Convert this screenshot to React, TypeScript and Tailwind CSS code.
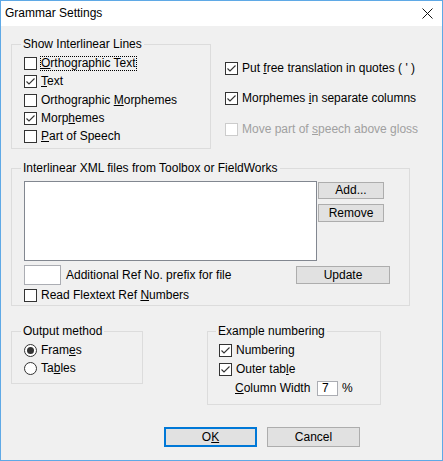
import React from "react";

const CheckBox: React.FC<{ checked?: boolean; disabled?: boolean }> = ({ checked, disabled }) => (
  <div
    className={`w-[13px] h-[13px] shrink-0 bg-white border ${
      disabled ? "border-[#cccccc]" : "border-[#333333]"
    } flex items-center justify-center`}
  >
    {checked && (
      <svg width="11" height="11" viewBox="0 0 11 11">
        <path d="M1.5 5.5 L4 8 L9.5 2.5" fill="none" stroke="#333333" strokeWidth="1.1" />
      </svg>
    )}
  </div>
);

const Radio: React.FC<{ checked?: boolean }> = ({ checked }) => (
  <div className="w-[13px] h-[13px] shrink-0 rounded-full bg-white border border-[#333333] flex items-center justify-center">
    {checked && <div className="w-[7px] h-[7px] rounded-full bg-[#333333]" />}
  </div>
);

const Check: React.FC<{
  checked?: boolean;
  disabled?: boolean;
  className?: string;
  children: React.ReactNode;
}> = ({ checked, disabled, className = "", children }) => (
  <div className={`flex items-center ${className}`}>
    <CheckBox checked={checked} disabled={disabled} />
    <span className={`ml-[4px] whitespace-nowrap ${disabled ? "text-[#a0a0a0]" : ""}`}>{children}</span>
  </div>
);

const Button: React.FC<{ className?: string; children: React.ReactNode }> = ({ className = "", children }) => (
  <div
    className={`flex items-center justify-center bg-[#e1e1e1] border border-[#adadad] ${className}`}
  >
    {children}
  </div>
);

// legend sits on the fieldset's content edge, so pull it back over the padding
const Legend: React.FC<{ children: React.ReactNode }> = ({ children }) => (
  <legend className="-ml-[3px] px-[2px] leading-[15px]">{children}</legend>
);

export default function App() {
  return (
    <div className="w-[443px] h-[461px] border border-[#5fa9e6] bg-[#f0f0f0] flex flex-col font-['Liberation_Sans',Arial,sans-serif] text-[12px] text-black leading-[15px]">
      <div className="h-[25px] shrink-0 bg-white flex items-center justify-between pl-[4px] pr-[9px]">
        <span>Grammar Settings</span>
        <svg width="11" height="11" viewBox="0 0 11 11">
          <path d="M0.5 0.5 L10.5 10.5 M10.5 0.5 L0.5 10.5" stroke="#111" strokeWidth="1" />
        </svg>
      </div>

      <div className="pl-[10px]">
        {/* top row */}
        <div className="flex items-start mt-[11px]">
          <fieldset className="w-[200px] border border-[#dcdcdc] pl-[12px] pb-[3px]">
            <Legend>Show Interlinear Lines</Legend>
            <div className="pt-[2px] flex flex-col">
              <div className="flex items-center h-[18px]">
                <CheckBox />
                <span className="ml-[3px] border border-dotted border-black leading-[13px] whitespace-nowrap">
                  <u>O</u>rthographic Text
                </span>
              </div>
              <Check checked className="h-[19px]">
                <u>T</u>ext
              </Check>
              <Check className="h-[18px]">
                Orthographic <u>M</u>orphemes
              </Check>
              <Check checked className="h-[18px]">
                Morp<u>h</u>emes
              </Check>
              <Check className="h-[18px]">
                <u>P</u>art of Speech
              </Check>
            </div>
          </fieldset>

          <div className="ml-[14px] pt-[22px] flex flex-col gap-[12.5px]">
            <Check checked className="h-[18px]">
              Put <u>f</u>ree translation in quotes ( ' )
            </Check>
            <Check checked className="h-[18px]">
              Morphemes <u>i</u>n separate columns
            </Check>
            <Check disabled className="h-[18px]">
              Move part of <u>s</u>peech above gloss
            </Check>
          </div>
        </div>

        {/* XML files */}
        <fieldset className="mt-[12px] w-[399px] border border-[#dcdcdc] pl-[12px] pb-[3px]">
          <Legend>Interlinear XML files from Toolbox or FieldWorks</Legend>
          <div className="pt-[5px] flex items-start">
            <div className="w-[293px] h-[80px] bg-white border border-[#828790]" />
            <div className="ml-[1px] pt-[1px] flex flex-col gap-[5px]">
              <Button className="w-[66px] h-[17px]">Add...</Button>
              <Button className="w-[66px] h-[18px]">Remove</Button>
            </div>
          </div>
          <div className="mt-[4px] flex items-center pr-[19px]">
            <div className="w-[37px] h-[20px] bg-white border border-[#abadb3]" />
            <span className="ml-[5px]">Additional Ref No. prefix for file</span>
            <Button className="ml-auto w-[94px] h-[18px]">Update</Button>
          </div>
          <Check className="mt-[4px] h-[13px]">
            Read Flextext Ref <u>N</u>umbers
          </Check>
        </fieldset>

        {/* bottom groups */}
        <div className="mt-[18px] flex items-start">
          <fieldset className="w-[132px] border border-[#dcdcdc] pl-[12px] pb-[5px]">
            <Legend>Output method</Legend>
            <div className="pt-[2px] flex flex-col">
              <div className="flex items-center h-[18px]">
                <Radio checked />
                <span className="ml-[4px]">
                  Fram<u>e</u>s
                </span>
              </div>
              <div className="flex items-center h-[19px]">
                <Radio />
                <span className="ml-[4px]">
                  Ta<u>b</u>les
                </span>
              </div>
            </div>
          </fieldset>

          <fieldset className="ml-[64px] w-[174px] border border-[#dcdcdc] pl-[11px] pb-[6px]">
            <Legend>Example numbering</Legend>
            <div className="pt-[2px] flex flex-col">
              <Check checked className="h-[19px]">
                Numberin<u>g</u>
              </Check>
              <Check checked className="h-[19px]">
                Outer tab<u>l</u>e
              </Check>
              <div className="flex items-center h-[19px] pl-[16px]">
                <span className="w-[82px] whitespace-nowrap">
                  <u>C</u>olumn Width
                </span>
                <div className="w-[21px] h-[15px] bg-white border border-[#abadb3] pl-[4px] leading-[13px]">7</div>
                <span className="ml-[4px]">%</span>
              </div>
            </div>
          </fieldset>
        </div>

        {/* buttons */}
        <div className="mt-[22px] flex items-center pl-[153px]">
          <div className="w-[93px] h-[20px] flex items-center justify-center bg-[#e1e1e1] border-2 border-[#0078d7]">
            <span>
              O<u>K</u>
            </span>
          </div>
          <Button className="ml-[10px] w-[93px] h-[20px]">Cancel</Button>
        </div>
      </div>
    </div>
  );
}
